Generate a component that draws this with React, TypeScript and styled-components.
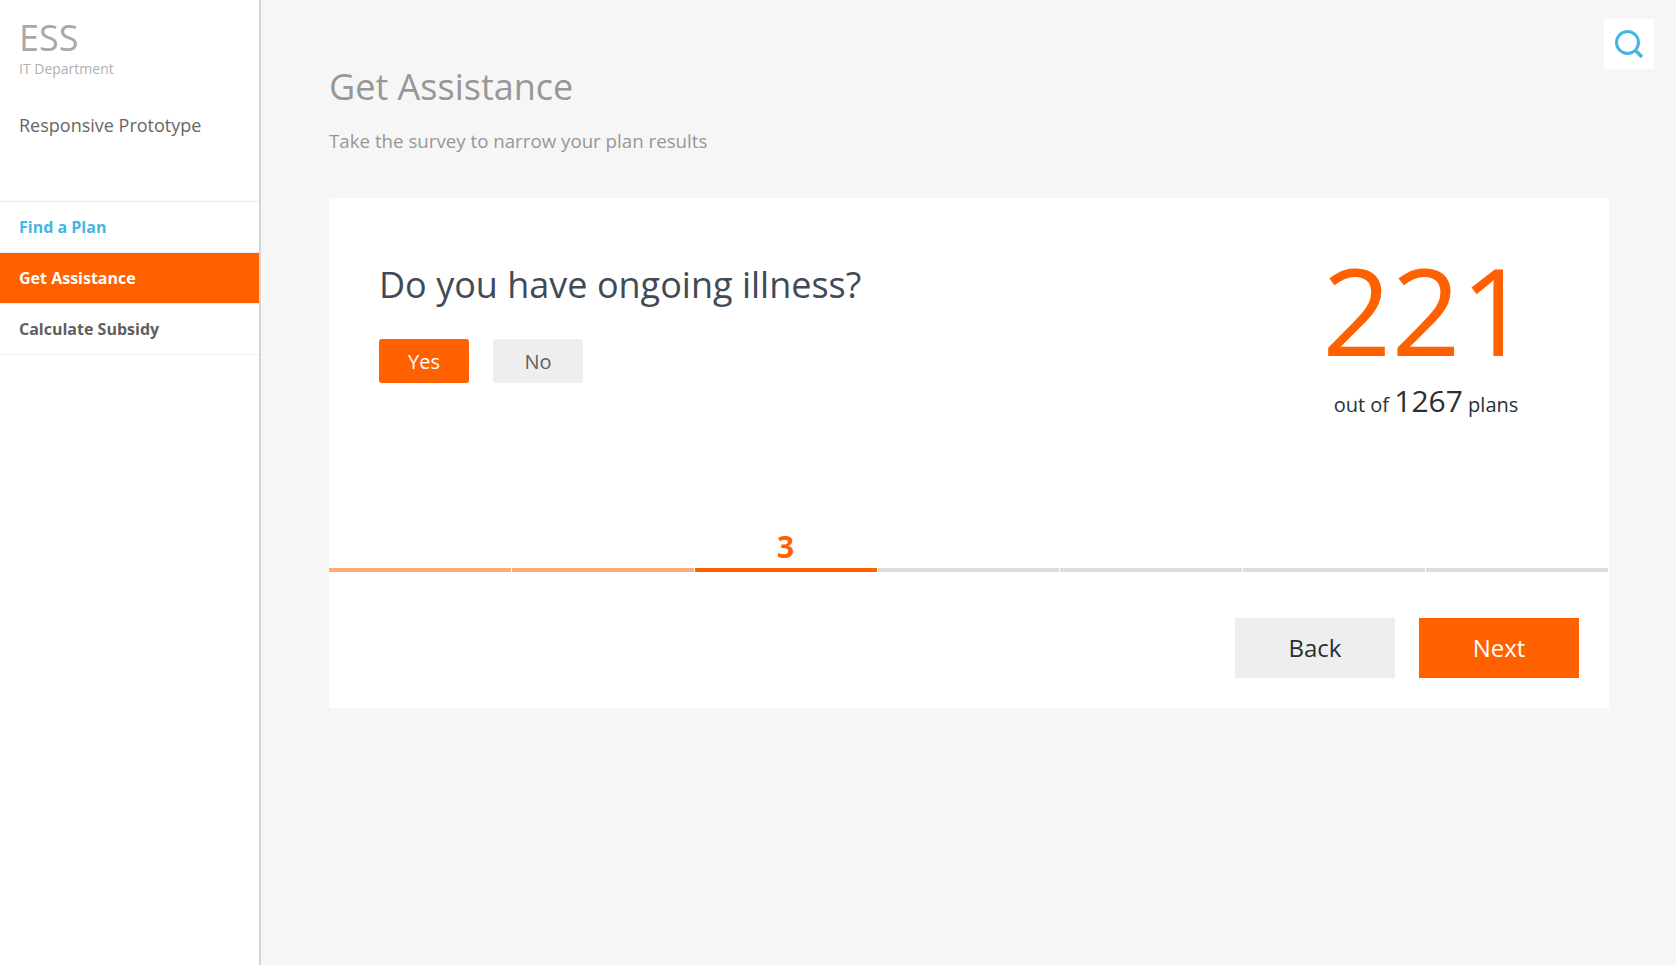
import React from "react";
import styled, { createGlobalStyle } from "styled-components";

const Global = createGlobalStyle`
  html, body { margin: 0; padding: 0; height: 100%; }
  body { font-family: "Open Sans", "Liberation Sans", sans-serif; background: #f6f6f6; overflow: hidden; }
  * { box-sizing: border-box; }
`;
const Page = styled.div`display: flex; height: 965px; position: relative;`;
const Sidebar = styled.aside`width: 261px; flex: none; background: #fff; border-right: 2px solid #d4d4d4;`;
const Brand = styled.div`padding: 16px 19px 0; height: 201px;`;
const Logo = styled.div`font-size: 36px; line-height: 44px; color: #a8a8a8;`;
const Dept = styled.div`font-size: 14px; line-height: 16px; margin-top: 1px; color: #b0b0b0;`;
const Proto = styled.div`font-size: 18px; line-height: 24px; margin-top: 36px; color: #666;`;
const Nav = styled.nav`border-top: 1px solid #ececec;`;
const NavItem = styled.div<{ $state?: "link" | "active" }>`
  height: 51px; padding: 0 0 1px 19px; display: flex; align-items: center;
  font-size: 16px; font-weight: 700; border-bottom: 1px solid #efefef;
  background: ${(p) => (p.$state === "active" ? "#ff6100" : "#fff")};
  color: ${(p) => (p.$state === "active" ? "#fff" : p.$state === "link" ? "#44b6e2" : "#5f5f5f")};
`;
const Main = styled.main`flex: 1; padding: 64px 68px 0;`;
const Title = styled.h1`margin: 0; font-size: 36px; line-height: 46px; font-weight: 400; color: #979797;`;
const Sub = styled.p`margin: 18px 0 0; font-size: 18.72px; line-height: 26px; color: #979797;`;
const Card = styled.section`margin-top: 44px; width: 1280px; height: 510px; background: #fff; display: flex; flex-direction: column;`;
const Body = styled.div`height: 370px; padding: 0 51px 0 50px; display: flex; justify-content: space-between;`;
const Question = styled.div`padding-top: 62px;`;
const QText = styled.h2`margin: 0; font-size: 36px; line-height: 50px; font-weight: 400; color: #424a55;`;
const Choices = styled.div`display: flex; gap: 24px; margin-top: 29px;`;
const Choice = styled.div<{ $on?: boolean }>`
  width: 90px; height: 44px; border-radius: 3px; display: flex; align-items: center; justify-content: center; font-size: 20px;
  background: ${(p) => (p.$on ? "#ff6100" : "#eeeeee")}; color: ${(p) => (p.$on ? "#fff" : "#5f5f5f")};
`;
const Counter = styled.div`width: 250px; margin-right: 7px; text-align: center; padding-top: 42px;`;
const Big = styled.div`font-size: 121px; line-height: 139px; font-weight: 400; color: #ff6100;`;
const OutOf = styled.div`font-size: 20px; line-height: 44px; color: #2a2f36;`;
const Total = styled.span`font-size: 30px;`;
const Steps = styled.div`display: flex; gap: 1px; height: 4px; width: 1279px;`;
const Step = styled.div<{ $s: "done" | "now" | "todo" }>`
  flex: 1; position: relative;
  background: ${(p) => (p.$s === "done" ? "#ffab7a" : p.$s === "now" ? "#ff6100" : "#dcdcdc")};
`;
const StepNum = styled.span`position: absolute; left: 0; right: 0; bottom: 7px; text-align: center; font-size: 30px; line-height: 36px; font-weight: 700; color: #ff6100;`;
const Footer = styled.div`flex: 1; display: flex; justify-content: flex-end; gap: 24px; padding: 46px 30px 0 0;`;
const Btn = styled.div<{ $primary?: boolean }>`
  width: 160px; height: 60px; padding-bottom: 1px; display: flex; align-items: center; justify-content: center; font-size: 24px;
  background: ${(p) => (p.$primary ? "#ff6100" : "#eeeeee")}; color: ${(p) => (p.$primary ? "#fff" : "#2a2f36")};
`;
const SearchBtn = styled.div`position: absolute; top: 19px; right: 22px; width: 50px; height: 50px; background: #fff; display: flex; align-items: center; justify-content: center;`;

const steps: ("done" | "now" | "todo")[] = ["done", "done", "now", "todo", "todo", "todo", "todo"];

export default function App() {
  return (
    <Page>
      <Global />
      <Sidebar>
        <Brand>
          <Logo>ESS</Logo>
          <Dept>IT Department</Dept>
          <Proto>Responsive Prototype</Proto>
        </Brand>
        <Nav>
          <NavItem $state="link">Find a Plan</NavItem>
          <NavItem $state="active">Get Assistance</NavItem>
          <NavItem>Calculate Subsidy</NavItem>
        </Nav>
      </Sidebar>
      <Main>
        <Title>Get Assistance</Title>
        <Sub>Take the survey to narrow your plan results</Sub>
        <Card>
          <Body>
            <Question>
              <QText>Do you have ongoing illness?</QText>
              <Choices>
                <Choice $on>Yes</Choice>
                <Choice>No</Choice>
              </Choices>
            </Question>
            <Counter>
              <Big>221</Big>
              <OutOf>out of <Total>1267</Total> plans</OutOf>
            </Counter>
          </Body>
          <Steps>
            {steps.map((s, i) => (
              <Step key={i} $s={s}>{s === "now" && <StepNum>{i + 1}</StepNum>}</Step>
            ))}
          </Steps>
          <Footer>
            <Btn>Back</Btn>
            <Btn $primary>Next</Btn>
          </Footer>
        </Card>
      </Main>
      <SearchBtn>
        <svg width="30" height="30" viewBox="0 0 30 30" fill="none" stroke="#44b6e2" strokeWidth="3">
          <circle cx="13.5" cy="13.5" r="11" />
          <path d="M21.5 21.5 L28 28" strokeWidth="3.6" />
        </svg>
      </SearchBtn>
    </Page>
  );
}
